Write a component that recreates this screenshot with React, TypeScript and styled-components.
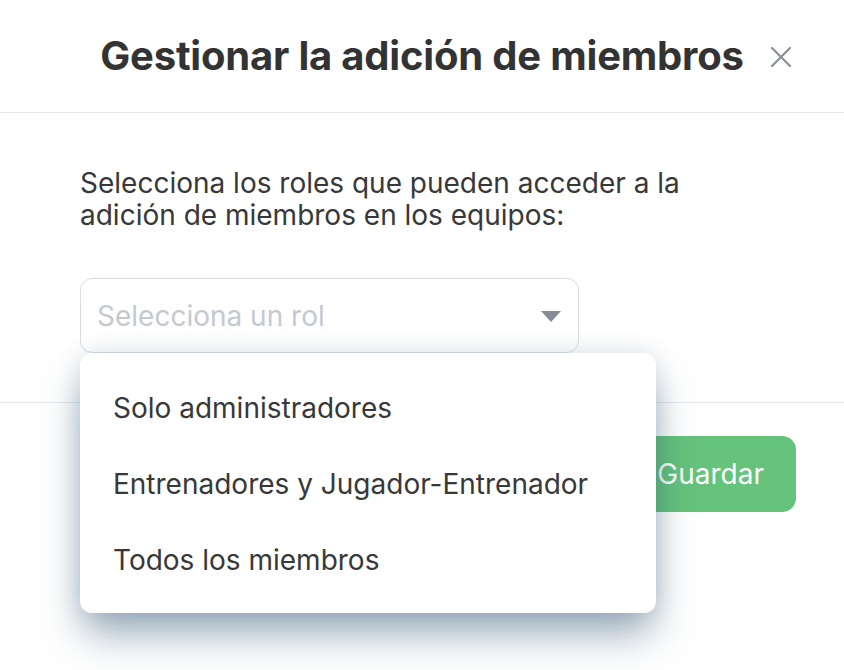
import styled, { createGlobalStyle } from 'styled-components';

const GlobalStyle = createGlobalStyle`
  html, body {
    margin: 0;
    padding: 0;
    background: #ffffff;
  }

  body {
    font-family: Inter, 'Noto Sans', sans-serif;
    color: #363636;
  }
`;

const Modal = styled.div`
  position: relative;
  width: 844px;
  height: 670px;
  background: #ffffff;
  overflow: hidden;
`;

const Header = styled.header`
  position: relative;
  display: flex;
  align-items: center;
  justify-content: center;
  height: 112px;
  border-bottom: 1.5px solid #e6eaef;
`;

const Title = styled.h1`
  margin: 0;
  font-size: 40px;
  font-weight: 700;
  line-height: 1;
  color: #333333;
  letter-spacing: -0.2px;
`;

const CloseButton = styled.button`
  position: absolute;
  top: 44px;
  right: 50px;
  display: flex;
  align-items: center;
  justify-content: center;
  width: 26px;
  height: 26px;
  padding: 0;
  background: none;
  border: 0;
  cursor: pointer;
`;

const Body = styled.section`
  position: relative;
  padding: 54px 80px 49px;
  border-bottom: 1.5px solid #e6eaef;
`;

const Description = styled.p`
  margin: 0 0 47px;
  width: 640px;
  font-size: 28px;
  line-height: 32px;
  color: #383838;
`;

const SelectField = styled.div`
  position: relative;
`;

const SelectBox = styled.div`
  box-sizing: border-box;
  display: flex;
  align-items: center;
  justify-content: space-between;
  width: 499px;
  height: 75px;
  padding: 0 17px 0 16px;
  border: 1.5px solid #d8dde5;
  border-radius: 12px;
`;

const Placeholder = styled.span`
  font-size: 28px;
  color: #c4c9d1;
`;

const Caret = styled.span`
  width: 0;
  height: 0;
  border-left: 10px solid transparent;
  border-right: 10px solid transparent;
  border-top: 11px solid #868b93;
  margin-top: 2px;
`;

const Menu = styled.ul`
  position: absolute;
  top: 75px;
  left: 0;
  z-index: 2;
  box-sizing: border-box;
  width: 576px;
  height: 260px;
  margin: 0;
  padding: 17px 0 15px;
  list-style: none;
  background: #ffffff;
  border-radius: 12px;
  box-shadow: 0 24px 40px -4px rgba(50, 85, 115, 0.5), 0 0 22px rgba(50, 85, 115, 0.14);
`;

const MenuItem = styled.li`
  display: flex;
  align-items: center;
  height: 76px;
  padding: 0 33px;
  font-size: 28px;
  color: #383838;
  cursor: pointer;
`;

const Footer = styled.footer`
  display: flex;
  justify-content: flex-end;
  padding: 33px 48px;
`;

const SaveButton = styled.button`
  height: 76px;
  padding: 0 32px;
  font-family: inherit;
  font-size: 28px;
  color: #ffffff;
  background: #65c37b;
  border: 0;
  border-radius: 14px;
  cursor: pointer;
`;

const roles = ['Solo administradores', 'Entrenadores y Jugador-Entrenador', 'Todos los miembros'];

export default function App() {
  return (
    <>
      <GlobalStyle />
      <Modal>
        <Header>
          <Title>Gestionar la adición de miembros</Title>
          <CloseButton aria-label="Cerrar">
            <svg width="22" height="22" viewBox="0 0 22 22">
              <path d="M2 2L20 20M20 2L2 20" stroke="#8a9099" strokeWidth="2.2" strokeLinecap="round" />
            </svg>
          </CloseButton>
        </Header>
        <Body>
          <Description>
            Selecciona los roles que pueden acceder a la adición de miembros en los equipos:
          </Description>
          <SelectField>
            <SelectBox>
              <Placeholder>Selecciona un rol</Placeholder>
              <Caret />
            </SelectBox>
            <Menu>
              {roles.map((role) => (
                <MenuItem key={role}>{role}</MenuItem>
              ))}
            </Menu>
          </SelectField>
        </Body>
        <Footer>
          <SaveButton>Guardar</SaveButton>
        </Footer>
      </Modal>
    </>
  );
}
